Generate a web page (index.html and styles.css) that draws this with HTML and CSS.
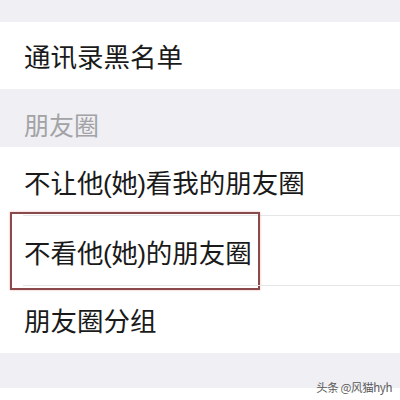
FILE: index.html
```html
<!DOCTYPE html>
<html lang="zh">
<head>
<meta charset="utf-8">
<link rel="stylesheet" href="styles.css">
</head>
<body>
<div class="page">
  <div class="gap-top"></div>
  <div class="group">
    <div class="row row-a">通讯录黑名单</div>
  </div>
  <div class="section-header">朋友圈</div>
  <div class="group">
    <div class="row row-b sep">不让他<span class="p">(</span>她<span class="p">)</span>看我的朋友圈</div>
    <div class="row row-c sep">不看他<span class="p">(</span>她<span class="p">)</span>的朋友圈<div class="highlight"></div></div>
    <div class="row row-d">朋友圈分组</div>
  </div>
  <div class="gap-bottom"></div>
  <div class="footer"></div>
  <div class="watermark">头条 @风猫hyh</div>
</div>
</body>
</html>
```

FILE: styles.css
```css
html, body {
  margin: 0;
  padding: 0;
}
body {
  background: #ffffff;
  font-family: "Noto Sans CJK SC", "Noto Sans", sans-serif;
}
.page {
  position: relative;
  width: 400px;
  height: 400px;
  overflow: hidden;
  background: #efeff4;
}
.gap-top {
  height: 22px;
}
.group {
  background: #ffffff;
}
.row {
  position: relative;
  padding-left: 24px;
  font-size: 26.5px;
  color: #1a1a1a;
  white-space: nowrap;
  text-autospace: no-autospace;
}
.row .p {
  font-family: "Liberation Sans", sans-serif;
  margin: 0 -0.5px;
}
.row-a { height: 67px; line-height: 68px; }
.row-b { height: 69px; line-height: 70px; }
.row-c { height: 70px; line-height: 71px; }
.row-d { height: 67px; line-height: 68px; }
.sep::after {
  content: "";
  position: absolute;
  left: 23px;
  right: 0;
  bottom: 0;
  height: 1px;
  background: #e6e6e8;
}
.section-header {
  height: 58px;
  box-sizing: border-box;
  padding: 18px 0 0 24px;
  font-size: 25px;
  line-height: 34px;
  color: #a3a3a6;
}
.highlight {
  position: absolute;
  left: 10px;
  top: -4px;
  width: 250px;
  height: 78px;
  box-sizing: border-box;
  border: 2px solid #8a4a4c;
  box-shadow: 0 0 2px rgba(230, 120, 120, 0.6);
}
.gap-bottom {
  height: 35px;
}
.footer {
  height: 12px;
  background: #ffffff;
}
.watermark {
  position: absolute;
  right: 8px;
  bottom: 5px;
  font-size: 11.5px;
  line-height: 16px;
  color: #5a5a5a;
  font-family: "Noto Sans CJK SC", "Liberation Sans", sans-serif;
  letter-spacing: -0.4px;
  text-autospace: no-autospace;
}
```
